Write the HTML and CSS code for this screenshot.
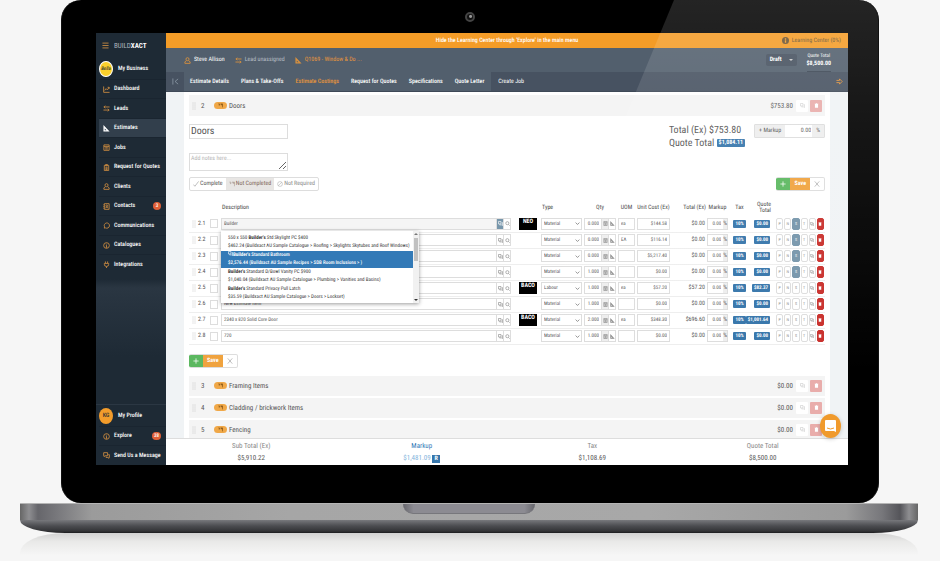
FILE: index.html
```html
<!doctype html>
<html lang="en">
  <head>
    <meta charset="UTF-8" />
    <meta name="viewport" content="width=device-width, initial-scale=1.0" />
    <title>Buildxact - Estimate Costings</title>
    <link rel="stylesheet" href="styles.css">
  </head>
  <body>
    <svg class="sprite" aria-hidden="true">
      <symbol id="i-menu" viewBox="0 0 16 16"><path d="M1 2.5h14M1 8h14M1 13.5h14" /></symbol>
      <symbol id="i-chart" viewBox="0 0 16 16"><path d="M1.5 1v13.500H15M4 10l3-4 3 3 4-6M10.500 3H14v3.500" /></symbol>
      <symbol id="i-leads" viewBox="0 0 16 16"><path d="M15 4.500H2M5 1.500l-3 3 3 3M1 11.500h13M11 8.500l3 3-3 3" /></symbol>
      <symbol id="i-ruler" viewBox="0 0 16 16"><path class="solid" fill-rule="evenodd" d="M1 0l14 15H1zM4 8v4h4z" /></symbol>
      <symbol id="i-jobs" viewBox="0 0 16 16"><path d="M2 2h12v12.500H2zM2 5.500h12M5 8.500h6M5 11.500h6" /></symbol>
      <symbol id="i-quote" viewBox="0 0 16 16"><path d="M3 3h10v12H3zM6 1h4v3H6zM5.500 7.500h5M5.500 10h5M5.500 12.500h5" /></symbol>
      <symbol id="i-user" viewBox="0 0 16 16"><path d="M8 1.500a3.500 3.500 0 0 1 0 7a3.500 3.500 0 0 1 0-7M5.500 8.500L2 11v3.500h12V11l-3.500-2.500" /></symbol>
      <symbol id="i-contacts" viewBox="0 0 16 16"><path d="M3 1.500h11v13H3zM1 4h2M1 8h2M1 12h2M8.500 4.500a2 2 0 0 1 0 4a2 2 0 0 1 0-4M5.500 12c0-3 6-3 6 0" /></symbol>
      <symbol id="i-chat" viewBox="0 0 16 16"><path d="M3 14l.5-3A6 6 0 1 1 6 13.500z" /></symbol>
      <symbol id="i-info" viewBox="0 0 16 16"><circle cx="8" cy="8" r="6.500" /><path d="M8 4v1.500M6.500 7.500H8V12M6.500 12h3" /></symbol>
      <symbol id="i-info-solid" viewBox="0 0 16 16"><path class="solid" fill-rule="evenodd" d="M8 0a8 8 0 0 1 0 16a8 8 0 0 1 0-16M6.500 3v3h3V3zM6.500 7.500V13h3V7.500z" /></symbol>
      <symbol id="i-plug" viewBox="0 0 16 16"><path d="M5.500 1v4M10.500 1v4M3 5.500h10v2a5 5 0 0 1-10 0zM8 12.500V16" /></symbol>
      <symbol id="i-message" viewBox="0 0 16 16"><path d="M1.500 1.500h9v7H5L2.500 10.500v-2h-1zM12 6h2.500v6.500h-1v2l-2.500-2H7V10" /></symbol>
      <symbol id="i-collapse" viewBox="0 0 16 16"><path d="M2 1v14M14 2L7 8l7 6M7 8h1" /></symbol>
      <symbol id="i-arrow" viewBox="0 0 16 16"><path d="M1 5.500h7V2l6 6-6 6v-3.500H1" /></symbol>
      <symbol id="i-grip" viewBox="0 0 8 16"><path d="M2 2v.1M6 2v.1M2 6v.1M6 6v.1M2 10v.1M6 10v.1M2 14v.1M6 14v.1" /></symbol>
      <symbol id="i-flag" viewBox="0 0 16 16"><path d="M1 3h4v4H2.500M8 3h5v5M9 5h4M14.500 2v12" /></symbol>
      <symbol id="i-copy" viewBox="0 0 16 16"><path d="M1.500 1.500h8v8h-8zM12 5h2.500v9.500L12 12.500H5V11" /></symbol>
      <symbol id="i-search" viewBox="0 0 16 16"><circle cx="7.500" cy="7" r="5" /><path d="M11 11l4 4" /></symbol>
      <symbol id="i-calc" viewBox="0 0 16 16"><path d="M2.500 1.500h11v13h-11zM3 5h10M5 8h6M5 10h6M5 12h6" /></symbol>
      <symbol id="i-trash" viewBox="0 0 16 16"><path class="solid" d="M3 4h10v11H3zM2 2h12v2H2zM6 1h4v1H6z" /></symbol>
      <symbol id="i-check" viewBox="0 0 16 16"><path d="M1 9.500l4 4.500L15 1" /></symbol>
      <symbol id="i-ban" viewBox="0 0 16 16"><circle cx="8" cy="8" r="6.500" /><path d="M3.500 12.500l9-9" /></symbol>
      <symbol id="i-plus" viewBox="0 0 16 16"><path d="M8 1v14M1 8h14" /></symbol>
      <symbol id="i-close" viewBox="0 0 16 16"><path d="M2 1l12 14M14 1L2 15" /></symbol>
      <symbol id="i-down" viewBox="0 0 16 16"><path d="M2 5l6 6 6-6" /></symbol>
    </svg>

    <div class="laptop">
      <div class="lid">
        <div class="bezel-top"><span class="camera"></span></div>

        <div class="screen">
          <aside class="sidebar">
            <a class="brand" href="#"><svg class="icon"><use href="#i-menu" /></svg><span>BUILD<b>XACT</b></span></a>
            <a class="account" href="#"><span class="avatar avatar-business">Bella</span>My Business</a>
            <nav class="menu">
              <a href="#"><svg class="icon"><use href="#i-chart" /></svg>Dashboard</a>
              <a href="#"><svg class="icon"><use href="#i-leads" /></svg>Leads</a>
              <a class="active" href="#"><svg class="icon"><use href="#i-ruler" /></svg>Estimates</a>
              <a href="#"><svg class="icon"><use href="#i-jobs" /></svg>Jobs</a>
              <a href="#"><svg class="icon"><use href="#i-quote" /></svg>Request for Quotes</a>
              <a href="#"><svg class="icon"><use href="#i-user" /></svg>Clients</a>
              <a href="#"><svg class="icon"><use href="#i-contacts" /></svg>Contacts<span class="count">3</span></a>
              <a href="#"><svg class="icon"><use href="#i-chat" /></svg>Communications</a>
              <a href="#"><svg class="icon"><use href="#i-info" /></svg>Catalogues</a>
              <a href="#"><svg class="icon"><use href="#i-plug" /></svg>Integrations</a>
            </nav>
            <div class="sidebar-bottom">
              <a class="account" href="#"><span class="avatar">KG</span>My Profile</a>
              <nav class="menu">
                <a href="#"><svg class="icon"><use href="#i-info" /></svg>Explore<span class="count">38</span></a>
                <a href="#"><svg class="icon"><use href="#i-message" /></svg>Send Us a Message</a>
              </nav>
            </div>
          </aside>

          <main class="main">
            <div class="banner">
              <span>Hide the Learning Center through 'Explore' in the main menu</span>
              <a href="#"><svg class="icon"><use href="#i-info-solid" /></svg>Learning Center (0%)</a>
            </div>

            <header class="topbar">
              <a href="#"><svg class="icon"><use href="#i-user" /></svg>Steve Allison</a>
              <a class="muted" href="#"><svg class="icon"><use href="#i-leads" /></svg>Lead unassigned</a>
              <a class="orange" href="#"><svg class="icon"><use href="#i-ruler" /></svg>Q1069 - Window &amp; Do ...</a>
              <button class="status" type="button">Draft <span class="caret"></span></button>
              <div class="topbar-total"><span>Quote Total</span><b>$8,500.00</b></div>
            </header>

            <nav class="tabs">
              <button class="tabs-collapse" type="button" aria-label="Collapse"><svg class="icon"><use href="#i-collapse" /></svg></button>
              <div class="tabs-list">
                <a href="#">Estimate Details</a>
                <a href="#">Plans &amp; Take-Offs</a>
                <a class="orange" href="#">Estimate Costings</a>
                <a href="#">Request for Quotes</a>
                <a href="#">Specifications</a>
                <a href="#">Quote Letter</a>
              </div>
              <a class="create-job" href="#">Create Job</a>
              <button class="tabs-next" type="button" aria-label="Next"><svg class="icon"><use href="#i-arrow" /></svg></button>
            </nav>

            <div class="content">
              <div class="panel">
                <div class="group">
                  <svg class="grip"><use href="#i-grip" /></svg><span class="group-no">2</span>
                  <span class="pill"><svg class="icon"><use href="#i-flag" /></svg></span><span>Doors</span>
                  <span class="group-price">$753.80</span>
                  <button class="group-copy" type="button" aria-label="Copy"><svg class="icon"><use href="#i-copy" /></svg></button>
                  <button class="group-delete" type="button" aria-label="Delete"><svg class="icon"><use href="#i-trash" /></svg></button>
                </div>

                <div class="editor">
                  <div class="editor-fields">
                    <input class="name" type="text" value="Doors" aria-label="Category name" />
                    <textarea class="notes" placeholder="Add notes here..." aria-label="Notes"></textarea>
                  </div>
                  <div class="editor-totals">
                    <p>Total (Ex) $753.80</p>
                    <p>Quote Total <span class="badge">$1,084.11</span></p>
                  </div>
                  <div class="markup">
                    <label for="markup">+ Markup</label>
                    <input id="markup" type="text" value="0.00" />
                    <span>%</span>
                  </div>
                </div>

                <div class="toolbar">
                  <div class="buttons">
                    <button type="button"><svg class="icon"><use href="#i-check" /></svg>Complete</button>
                    <button class="pressed" type="button"><svg class="icon"><use href="#i-flag" /></svg>Not Completed</button>
                    <button class="dim" type="button"><svg class="icon"><use href="#i-ban" /></svg>Not Required</button>
                  </div>
                  <div class="buttons save-buttons">
                    <button class="add" type="button" aria-label="Add"><svg class="icon"><use href="#i-plus" /></svg></button>
                    <button class="save" type="button">Save</button>
                    <button type="button" aria-label="Close"><svg class="icon"><use href="#i-close" /></svg></button>
                  </div>
                </div>

                <table class="items">
                  <colgroup>
                    <col class="c-grip"><col class="c-no"><col class="c-check"><col><col class="c-logo">
                    <col class="c-type"><col class="c-qty"><col class="c-uom"><col class="c-cost"><col class="c-total">
                    <col class="c-markup"><col class="c-tax"><col class="c-quote"><col class="c-actions">
                  </colgroup>
                  <thead>
                    <tr>
                      <th></th><th></th><th></th>
                      <th class="left">Description</th>
                      <th></th>
                      <th class="left">Type</th>
                      <th>Qty</th>
                      <th>UOM</th>
                      <th>Unit Cost (Ex)</th>
                      <th class="right">Total (Ex)</th>
                      <th>Markup</th>
                      <th>Tax</th>
                      <th class="right">Quote<br>Total</th>
                      <th></th>
                    </tr>
                  </thead>
                  <tbody id="items"></tbody>
                </table>

                <div class="toolbar toolbar-bottom">
                  <div class="buttons save-buttons">
                    <button class="add" type="button" aria-label="Add"><svg class="icon"><use href="#i-plus" /></svg></button>
                    <button class="save" type="button">Save</button>
                    <button type="button" aria-label="Close"><svg class="icon"><use href="#i-close" /></svg></button>
                  </div>
                </div>

                <div class="groups">
                  <div class="group">
                    <svg class="grip"><use href="#i-grip" /></svg><span class="group-no">3</span>
                    <span class="pill"><svg class="icon"><use href="#i-flag" /></svg></span><span>Framing Items</span>
                    <span class="group-price">$0.00</span>
                    <button class="group-copy" type="button" aria-label="Copy"><svg class="icon"><use href="#i-copy" /></svg></button>
                    <button class="group-delete" type="button" aria-label="Delete"><svg class="icon"><use href="#i-trash" /></svg></button>
                  </div>
                  <div class="group">
                    <svg class="grip"><use href="#i-grip" /></svg><span class="group-no">4</span>
                    <span class="pill"><svg class="icon"><use href="#i-flag" /></svg></span><span>Cladding / brickwork Items</span>
                    <span class="group-price">$0.00</span>
                    <button class="group-copy" type="button" aria-label="Copy"><svg class="icon"><use href="#i-copy" /></svg></button>
                    <button class="group-delete" type="button" aria-label="Delete"><svg class="icon"><use href="#i-trash" /></svg></button>
                  </div>
                  <div class="group">
                    <svg class="grip"><use href="#i-grip" /></svg><span class="group-no">5</span>
                    <span class="pill"><svg class="icon"><use href="#i-flag" /></svg></span><span>Fencing</span>
                    <span class="group-price">$0.00</span>
                    <button class="group-copy" type="button" aria-label="Copy"><svg class="icon"><use href="#i-copy" /></svg></button>
                    <button class="group-delete" type="button" aria-label="Delete"><svg class="icon"><use href="#i-trash" /></svg></button>
                  </div>
                </div>
              </div>
            </div>

            <footer class="totals">
              <div><span>Sub Total (Ex)</span><strong>$5,910.22</strong></div>
              <div class="totals-markup"><span>Markup</span><strong>$1,481.09 <b>R</b></strong></div>
              <div><span>Tax</span><strong>$1,108.69</strong></div>
              <div><span>Quote Total</span><strong>$8,500.00</strong></div>
            </footer>

            <button class="messenger" type="button" aria-label="Open chat">
              <svg viewBox="0 0 21 24"><path class="bubble" d="M6 6h9q1 0 1 1v11l-2-1H6q-1 0-1-1V7q0-1 1-1z" /><path class="smile" d="M7 14q3.500 2 7 0" /></svg>
            </button>
          </main>
        </div>
        <div class="glare"></div>
      </div>

      <div class="base"><span class="notch"></span></div>
      <div class="underside"></div>
      <div class="reflection"></div>
    </div>

    <script src="items.js"></script>
  </body>
</html>
```
FILE: items.js
```js
const items = [
  { no: "2.1", text: "Builder", logo: "NEO", type: "Material", qty: "0.000", uom: "ea", cost: "$144.58", total: "$0.00", quote: "$0.00", s: true },
  { no: "2.2", text: "", type: "Material", qty: "0.000", uom: "EA", cost: "$116.14", total: "$0.00", quote: "$0.00", s: true },
  { no: "2.3", text: "", type: "Material", qty: "0.000", uom: "", cost: "$5,217.40", total: "$0.00", quote: "$0.00", s: true },
  { no: "2.4", text: "", type: "Material", qty: "1.000", uom: "", cost: "$0.00", total: "$0.00", quote: "$0.00", s: true },
  { no: "2.5", text: "", logo: "BACO", type: "Labour", qty: "1.000", uom: "ea", cost: "$57.20", total: "$57.20", quote: "$82.37" },
  { no: "2.6", text: "New Estimate Item", type: "Material", qty: "1.000", uom: "", cost: "$0.00", total: "$0.00", quote: "$0.00" },
  { no: "2.7", text: "2340 x 820 Solid Core Door", logo: "BACO", type: "Material", qty: "2.000", uom: "ea", cost: "$348.30", total: "$696.60", quote: "$1,001.64" },
  { no: "2.8", text: "720", type: "Material", qty: "1.000", uom: "", cost: "$0.00", total: "$0.00", quote: "$0.00" },
];

const icon = (name) => `<svg class="icon"><use href="#i-${name}" /></svg>`;

const suggestions = `
  <div class="suggestions">
    <ul>
      <li>550 x 550 <b>Builder's</b> Std Skylight PC $400<br>$462.24 (Buildxact AU Sample Catalogue &gt; Roofing &gt; Skylights Skytubes and Roof Windows)</li>
      <li class="selected">${icon("copy")}<b>Builder's</b> Standard Bathroom<br>$2,576.44 (Buildxact AU Sample Recipes &gt; SDB Room Inclusions &gt; )</li>
      <li><b>Builder's</b> Standard D/Bowl Vanity PC $900<br>$1,040.04 (Buildxact AU Sample Catalogue &gt; Plumbing &gt; Vanities and Basins)</li>
      <li><b>Builder's</b> Standard Privacy Pull Latch<br>$35.59 (Buildxact AU Sample Catalogue &gt; Doors &gt; Lockset)</li>
    </ul>
    <div class="scrollbar"><i class="up"></i><i class="thumb"></i><i class="down"></i></div>
  </div>`;

document.getElementById("items").innerHTML = items
  .map(
    (item, i) => `
  <tr>
    <td><svg class="grip"><use href="#i-grip" /></svg></td>
    <td>${item.no}</td>
    <td><input type="checkbox" aria-label="Select ${item.no}" /></td>
    <td class="description">
      <div class="field ${i === 0 ? "focused" : ""}">
        <input type="text" value="${item.text}" aria-label="Description ${item.no}" />
        <button type="button" aria-label="Catalogue">${icon("copy")}</button>
        <button type="button" aria-label="Search">${icon("search")}</button>
      </div>
      ${i === 0 ? suggestions : ""}
    </td>
    <td>${item.logo ? `<span class="logo">${item.logo}</span>` : ""}</td>
    <td>
      <div class="field select">
        <select aria-label="Type ${item.no}"><option>${item.type}</option></select>${icon("down")}
      </div>
    </td>
    <td>
      <div class="field qty">
        <input type="text" value="${item.qty}" aria-label="Qty ${item.no}" />
        <button type="button" aria-label="Calculator">${icon("calc")}</button>
        <button type="button" aria-label="Take-off">${icon("ruler")}</button>
      </div>
    </td>
    <td><div class="field"><input type="text" value="${item.uom}" aria-label="UOM ${item.no}" /></div></td>
    <td><div class="field amount"><input type="text" value="${item.cost}" aria-label="Unit cost ${item.no}" /></div></td>
    <td class="right total">${item.total}</td>
    <td><div class="field amount"><input type="text" value="0.00" aria-label="Markup ${item.no}" /><span>%</span></div></td>
    <td class="center"><span class="badge">10%</span></td>
    <td><div class="quote"><span class="badge">${item.quote}</span></div></td>
    <td>
      <div class="actions">
        <button type="button">P</button>
        <button type="button">N</button>
        <button type="button" class="${item.s ? "on" : ""}">S</button>
        <button type="button">T</button>
        <button type="button" aria-label="Copy">${icon("copy")}</button>
        <button type="button" class="delete" aria-label="Delete">${icon("trash")}</button>
      </div>
    </td>
  </tr>`,
  )
  .join("");
```
FILE: styles.css
```css
* {
  box-sizing: border-box;
}

body {
  margin: 0;
  background: #f6f6f6;
  font-family: "Liberation Sans Narrow", "Arial Narrow", "Roboto Condensed", "Liberation Sans", sans-serif;
  font-size: 6px;
  line-height: 8px;
  color: #555;
  text-rendering: geometricPrecision;
}

a {
  color: inherit;
  text-decoration: none;
}

button,
input,
select,
textarea {
  margin: 0;
  padding: 0;
  border: 0;
  border-radius: 0;
  background: none;
  font: inherit;
  color: inherit;
  min-width: 0;
  text-rendering: inherit;
}

button {
  display: flex;
  align-items: center;
  justify-content: center;
  cursor: pointer;
}

p,
ul {
  margin: 0;
  padding: 0;
  list-style: none;
}

.sprite {
  display: none;
}

.icon {
  width: 7px;
  height: 7px;
  flex: none;
  fill: none;
  stroke: currentColor;
  stroke-width: 2;
}

.solid {
  fill: currentColor;
  stroke: none;
}

.grip {
  width: 4px;
  height: 8px;
  display: block;
  stroke: #c4c4c4;
  stroke-width: 2;
  stroke-linecap: round;
}

.orange {
  color: #e8963a;
}

/* laptop */

.laptop {
  height: 100vh;
  display: flex;
  flex-direction: column;
  padding: 0 22px 0 20px;
}

.lid {
  position: relative;
  flex: 1;
  min-height: 0;
  display: flex;
  flex-direction: column;
  margin: 0 39px 0 41px;
  padding: 0 30px 38px 34px;
  background: #000;
  border: 1px solid #111;
  border-width: 0 1px;
  border-radius: 20px;
}

.bezel-top {
  height: 33px;
  flex: none;
  display: flex;
  align-items: center;
  justify-content: center;
  padding-right: 4px;
}

.camera {
  width: 10px;
  height: 10px;
  border-radius: 50%;
  border: 2px solid #444;
  background: radial-gradient(circle at 60% 40%, #999 0 1px, #111 2px);
}

.glare {
  position: absolute;
  inset: 0 0 90px 0;
  border-radius: 0 20px 0 0;
  clip-path: polygon(75% 0, 100% 0, 100% 100%, 54% 100%);
  background: linear-gradient(rgba(255, 255, 255, 0.14), rgba(255, 255, 255, 0.08) 35%, rgba(255, 255, 255, 0) 90%);
  pointer-events: none;
}

.base {
  height: 17px;
  flex: none;
  display: flex;
  justify-content: center;
  background: linear-gradient(90deg, #666 0, #8e8e91 1%, #66666b 2%, #77777b 4%, #9b9b9b 8%, #a6a6a6 30%, #a8a8a8 70%, #9b9b9b 92%, #77777b 96%, #55555a 98%, #8e8e91 99%, #666);
  border-top: 1px solid #b5b5b5;
}

.notch {
  width: 132px;
  height: 10px;
  border-radius: 0 0 10px 10px;
  background: linear-gradient(90deg, #66666c, #8c8b92 8%, #8c8b92 92%, #66666c);
  border-bottom: 1px solid #77777c;
}

.underside {
  height: 13px;
  flex: none;
  border-radius: 0 0 45px 45px / 0 0 13px 13px;
  background: linear-gradient(#77787c, #4c4d51 45%, #333437 85%, #1c1c1e);
}

.reflection {
  height: 28px;
  flex: none;
  border-radius: 45px 45px 0 0 / 20px 20px 0 0;
  background: linear-gradient(#d2d2d2, #e9e9e8 30%, #f6f6f6 80%);
}

.screen {
  flex: 1;
  min-height: 0;
  display: flex;
  overflow: hidden;
  background: #fff;
}

/* sidebar */

.sidebar {
  width: 70px;
  flex: none;
  display: flex;
  flex-direction: column;
  background: linear-gradient(#1e2a35 57%, #2a3642 59%, #1e2a35 75%);
  color: #fff;
  font-weight: 500;
}

.brand,
.account,
.menu a {
  display: flex;
  align-items: center;
  white-space: nowrap;
}

.sidebar .icon {
  color: #c98a41;
}

.brand {
  height: 25px;
  gap: 5px;
  padding-left: 6px;
  font-size: 7px;
  font-weight: normal;
  color: #aeb6bd;
}

.brand b {
  color: #fff;
}

.account {
  height: 21px;
  gap: 5px;
  padding-left: 3px;
}

.avatar {
  width: 14px;
  height: 16px;
  border-radius: 50%;
  background: #f39c2b;
  color: #333;
  line-height: 16px;
  text-align: center;
}

.avatar-business {
  border: 1px solid #fff;
  background: #fbd02c;
  font-size: 5px;
  font-style: italic;
  line-height: 14px;
}

.menu {
  display: grid;
  grid-auto-rows: 19px 20px;
}

.menu a {
  gap: 4px;
  margin-left: 3px;
  padding: 0 5px 0 4px;
  border-top: 1px solid #1a2530;
}

.menu .active {
  background: #323f4c;
}

.sidebar .active .icon {
  color: #fff;
}

.count {
  min-width: 8px;
  margin-left: auto;
  padding: 0 2px;
  border-radius: 4px;
  background: #e05f37;
  font-size: 5px;
  text-align: center;
}

.sidebar-bottom {
  margin-top: auto;
  border-top: 1px solid #2b3743;
}

/* header */

.main {
  position: relative;
  flex: 1;
  min-width: 0;
  display: flex;
  flex-direction: column;
}

.banner {
  height: 15px;
  flex: none;
  display: grid;
  grid-template-columns: 1fr auto 1fr;
  align-items: center;
  padding: 0 7px;
  background: #f49c27;
  color: #fff;
  font-weight: 500;
}

.banner span {
  grid-column: 2;
}

.banner a {
  justify-self: end;
  display: flex;
  align-items: center;
  gap: 3px;
  font-size: 6px;
  font-weight: normal;
  color: #6b5434;
}

.topbar {
  height: 24px;
  flex: none;
  display: flex;
  align-items: center;
  gap: 10px;
  padding: 0 17px 0 18px;
  background: #525f6d;
  color: #fff;
}

.topbar a {
  display: flex;
  align-items: center;
  gap: 3px;
}

.topbar a .icon {
  color: #d8913f;
}

.topbar .muted {
  color: #b5bcc4;
}

.topbar .orange {
  color: #e8963a;
}

.status {
  gap: 7px;
  height: 12px;
  margin-left: auto;
  padding: 0 4px;
  border-radius: 2px;
  background: #46515f;
  font-weight: bold;
}

.caret {
  border: 2px solid transparent;
  border-top-color: #ccc;
  border-bottom: 0;
}

.topbar-total {
  align-self: stretch;
  display: flex;
  flex-direction: column;
  align-items: center;
  justify-content: center;
  border-bottom: 1px solid #3b4653;
  font-size: 5px;
}

.topbar-total b {
  font-size: 6px;
}

.tabs {
  height: 20px;
  flex: none;
  display: flex;
  background: #475261;
  color: #fff;
  border-bottom: 1px solid #3e4957;
  font-weight: 500;
}

.tabs-collapse {
  width: 18px;
  color: #8792a0;
}

.tabs-list {
  display: flex;
  align-items: center;
  gap: 12px;
  padding: 0 7px 0 6px;
  background: #525f6d;
}

.create-job {
  padding: 6px 7px;
  font-weight: normal;
}

.tabs-next {
  margin-left: auto;
  width: 17px;
  color: #e8963a;
}

/* estimate */

.content {
  flex: 1;
  min-height: 0;
  overflow: hidden;
  padding: 0 18px;
  background: #f0f3f5;
}

.panel {
  min-height: 100%;
  padding: 3px 5px 0;
  background: #fff;
}

.group {
  display: flex;
  align-items: center;
  height: 20px;
  padding: 0 3px;
  background: #f4f4f4;
  font-size: 7px;
}

.panel > .group {
  height: 21px;
}

.group-no {
  width: 9px;
  margin-left: 5px;
}

.pill {
  display: flex;
  align-items: center;
  justify-content: center;
  width: 13px;
  height: 7px;
  margin: 0 2px 0 4px;
  border-radius: 4px;
  background: #f0a848;
  color: #7a4b10;
}

.pill .icon {
  width: 5px;
  height: 5px;
}

.group-price {
  margin-left: auto;
}

.group-copy,
.group-delete {
  width: 12px;
  height: 12px;
  margin-left: 2px;
  border-radius: 1px;
}

.group-copy {
  margin-left: 3px;
  background: #fff;
  color: #ccc;
}

.group-delete {
  background: #e9adab;
  color: #fff;
}

.group .icon {
  width: 5px;
  height: 5px;
}

.editor {
  display: flex;
  gap: 9px;
  padding-top: 8px;
}

.editor-fields {
  display: flex;
  flex-direction: column;
  gap: 14px;
  width: 99px;
  margin-right: auto;
}

.name,
.notes {
  border: 1px solid #ddd;
}

.name {
  height: 15px;
  padding: 0 1px;
  font-size: 10px;
}

.notes {
  height: 18px;
  padding: 1px;
  resize: vertical;
}

.notes::placeholder {
  color: #b5b5b5;
}

.editor-totals {
  font-size: 10px;
  line-height: 13px;
}

.badge {
  display: inline-block;
  padding: 0 2px;
  border-radius: 1px;
  background: #3776ab;
  color: #fff;
  font-size: 5px;
  font-weight: bold;
  line-height: 8px;
}

.editor-totals .badge {
  padding: 0 2px;
  font-size: 6px;
  vertical-align: middle;
}

.markup {
  display: flex;
  align-self: flex-start;
  height: 14px;
  border: 1px solid #ddd;
  border-radius: 1px;
  line-height: 12px;
}

.markup label,
.markup span {
  padding: 0 4px;
  background: #eee;
}

.markup input {
  width: 27px;
  padding-right: 1px;
  text-align: right;
}

.toolbar {
  display: flex;
  justify-content: space-between;
  margin: 6px 0 9px;
}

.toolbar-bottom {
  margin: 9px 0 8px;
}

.buttons {
  display: flex;
  height: 14px;
  border: 1px solid #ddd;
  border-radius: 2px;
  overflow: hidden;
}

.buttons button {
  gap: 1px;
  padding: 0 4px;
}

.buttons .icon {
  width: 6px;
  height: 6px;
  stroke-width: 1;
}

.buttons:not(.save-buttons) button {
  padding: 0 3px;
}

.buttons .pressed {
  background: #e8e6e4;
  color: #82685a;
}

.buttons .dim {
  color: #8a8a8a;
}

.save-buttons {
  border-left: 0;
}

.save-buttons .add {
  background: #5cb860;
  color: #fff;
}

.save-buttons .add .icon {
  stroke-width: 2;
}

.save-buttons .save {
  background: #f0a33f;
  color: #fff;
  font-weight: bold;
}

.items {
  width: 100%;
  table-layout: fixed;
  border-collapse: collapse;
}

.c-grip { width: 8px; }
.c-no { width: 12px; }
.c-check { width: 11px; }
.c-logo { width: 27px; }
.c-type { width: 43px; }
.c-qty { width: 34px; }
.c-uom { width: 19px; }
.c-cost { width: 35px; }
.c-total { width: 35px; }
.c-markup { width: 23px; }
.c-tax { width: 21px; }
.c-quote { width: 21px; }
.c-actions { width: 54px; }

.items th {
  height: 16px;
  padding: 0;
  font-weight: normal;
  line-height: 6px;
  white-space: nowrap;
  color: #444;
}

.items td {
  height: 16px;
  padding: 0 1px;
  border-bottom: 1px solid #eee;
  white-space: nowrap;
}

.items .left {
  padding-left: 2px;
  text-align: left;
}

.items .right {
  text-align: right;
}

.items .center {
  text-align: center;
}

.items td:first-child {
  padding-left: 3px;
}

.items input[type="checkbox"] {
  display: block;
  appearance: none;
  width: 8px;
  height: 9px;
  border: 1px solid #ddd;
}

.items td.description {
  position: relative;
  padding-right: 2px;
}

.field {
  display: flex;
  height: 12px;
  border: 1px solid #ddd;
  font-size: 5px;
}

.field input,
.field select {
  flex: 1;
  padding: 0 2px;
}

.field button {
  width: 7px;
  border-left: 1px solid #ddd;
  color: #888;
}

.field .icon {
  width: 5px;
  height: 5px;
}

.focused input {
  background: #f5f5f5;
}

.focused button:nth-of-type(1) {
  background: #7796ab;
  color: #fff;
}

.select {
  align-items: center;
  padding-right: 1px;
}

.select select {
  appearance: none;
}

.qty input,
.amount input {
  text-align: right;
}

.qty button:nth-of-type(1),
.field span {
  background: #eee;
}

.field span {
  font-size: 6px;
  line-height: 10px;
}

.logo {
  display: block;
  width: 18px;
  height: 12px;
  margin-left: 5px;
  background: #000;
  color: #fff;
  font-weight: bold;
  line-height: 7px;
  text-align: center;
}

.quote {
  display: flex;
  justify-content: flex-end;
}

.actions {
  display: flex;
  gap: 1px;
  padding-left: 4px;
}

.actions button {
  flex: 1;
  height: 12px;
  border: 1px solid #ddd;
  border-radius: 2px;
  font-size: 4px;
  color: #888;
}

.actions .icon {
  width: 4px;
  height: 4px;
}

.actions .on {
  border-color: #7796ab;
  background: #7796ab;
  color: #fff;
}

.actions .delete {
  border-color: #c9302c;
  background: #c9302c;
  color: #fff;
}

.suggestions {
  position: absolute;
  z-index: 2;
  top: 15px;
  left: 1px;
  display: flex;
  width: 198px;
  background: #fff;
  box-shadow: 0 1px 4px rgba(0, 0, 0, 0.4);
  font-size: 5px;
  color: #333;
}

.suggestions ul {
  flex: 1;
  padding: 3px 0 1px;
}

.suggestions li {
  padding: 0 0 1px 7px;
  line-height: 8px;
}

.suggestions .icon {
  width: 5px;
  height: 5px;
}

.suggestions .selected {
  background: #337ab7;
  color: #fff;
  font-weight: 500;
}

.scrollbar {
  display: flex;
  flex-direction: column;
  align-items: center;
  width: 6px;
  padding: 2px 0;
  background: #f1f1f1;
}

.scrollbar .up,
.scrollbar .down {
  border: 2px solid transparent;
}

.scrollbar .up {
  border-top: 0;
  border-bottom-color: #777;
}

.scrollbar .down {
  margin-top: auto;
  border-bottom: 0;
  border-top-color: #333;
}

.scrollbar .thumb {
  width: 4px;
  height: 23px;
  margin-top: 3px;
  background: #c1c1c1;
}

.groups {
  display: grid;
  gap: 2px;
}

.totals {
  height: 27px;
  flex: none;
  display: grid;
  grid-template-columns: repeat(4, 1fr);
  align-items: center;
  border-top: 1px solid #ddd;
  background: #fff;
  font-size: 7px;
  line-height: 12px;
  text-align: center;
  color: #888;
}

.totals span,
.totals strong {
  display: block;
}

.totals strong {
  font-size: 7px;
  font-weight: normal;
  color: #555;
}

.totals-markup span {
  color: #337ab7;
}

.totals .totals-markup strong {
  color: #7fb4dc;
}

.totals b {
  display: inline-block;
  width: 8px;
  background: #3776ab;
  color: #fff;
  font-size: 6px;
  line-height: 8px;
}

.messenger {
  position: absolute;
  right: 7px;
  bottom: 27px;
  width: 21px;
  height: 24px;
  border-radius: 50%;
  background: #f09a2c;
  box-shadow: 0 1px 4px rgba(0, 0, 0, 0.2);
}

.bubble {
  fill: #fff;
}

.smile {
  fill: none;
  stroke: #f09a2c;
}
```
